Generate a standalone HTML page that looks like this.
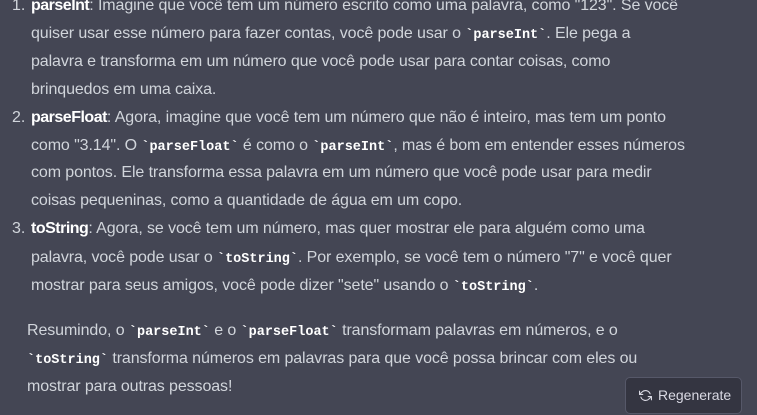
<!DOCTYPE html>
<html><head><meta charset="utf-8"><style>
html,body{margin:0;padding:0;width:757px;height:415px;overflow:hidden;background:#444654;}
body{font-family:"Liberation Sans",sans-serif;font-size:16px;color:#d1d5db;position:relative;}
.l{position:absolute;left:31px;white-space:nowrap;line-height:28px;letter-spacing:-0.1px;}
.n{position:absolute;left:12px;line-height:28px;}
b{color:#fff;font-weight:bold;letter-spacing:-0.5px;}
code{font-family:"Liberation Mono",monospace;font-weight:bold;color:#fff;font-size:13.5px;letter-spacing:0;}
.p{left:27px;}
.btn{position:absolute;left:625px;top:377px;width:117px;height:37px;background:#343541;border:1px solid #565869;border-radius:5px;box-sizing:border-box;color:#d9d9e3;font-size:14px;line-height:35px;}
.btn span{position:absolute;left:32px;}
.btn svg{position:absolute;left:13px;top:11px;}
</style></head><body>
<div class="n" style="top:-8px">1.</div>
<div class="l" style="top:-8px"><b>parseInt</b>: Imagine que você tem um número escrito como uma palavra, como "123". Se você</div>
<div class="l" style="top:20px">quiser usar esse número para fazer contas, você pode usar o <code>`parseInt`</code>. Ele pega a</div>
<div class="l" style="top:48px">palavra e transforma em um número que você pode usar para contar coisas, como</div>
<div class="l" style="top:76px">brinquedos em uma caixa.</div>
<div class="n" style="top:104px">2.</div>
<div class="l" style="top:104px"><b>parseFloat</b>: Agora, imagine que você tem um número que não é inteiro, mas tem um ponto</div>
<div class="l" style="top:132px">como "3.14". O <code>`parseFloat`</code> é como o <code>`parseInt`</code>, mas é bom em entender esses números</div>
<div class="l" style="top:159px">com pontos. Ele transforma essa palavra em um número que você pode usar para medir</div>
<div class="l" style="top:187px">coisas pequeninas, como a quantidade de água em um copo.</div>
<div class="n" style="top:215px">3.</div>
<div class="l" style="top:215px"><b>toString</b>: Agora, se você tem um número, mas quer mostrar ele para alguém como uma</div>
<div class="l" style="top:244px">palavra, você pode usar o <code>`toString`</code>. Por exemplo, se você tem o número "7" e você quer</div>
<div class="l" style="top:272px">mostrar para seus amigos, você pode dizer "sete" usando o <code>`toString`</code>.</div>
<div class="l p" style="top:317px">Resumindo, o <code>`parseInt`</code> e o <code>`parseFloat`</code> transformam palavras em números, e o</div>
<div class="l p" style="top:345px"><code>`toString`</code> transforma números em palavras para que você possa brincar com eles ou</div>
<div class="l p" style="top:373px">mostrar para outras pessoas!</div>
<div class="btn"><svg width="13" height="13" viewBox="0 0 24 24" fill="none" stroke="#d9d9e3" stroke-width="2" stroke-linecap="round" stroke-linejoin="round"><polyline points="1 4 1 10 7 10"/><polyline points="23 20 23 14 17 14"/><path d="M20.5 9A9 9 0 0 0 5.6 5.6L1 10m22 4l-4.6 4.4A9 9 0 0 1 3.5 15"/></svg><span>Regenerate</span></div>
</body></html>
